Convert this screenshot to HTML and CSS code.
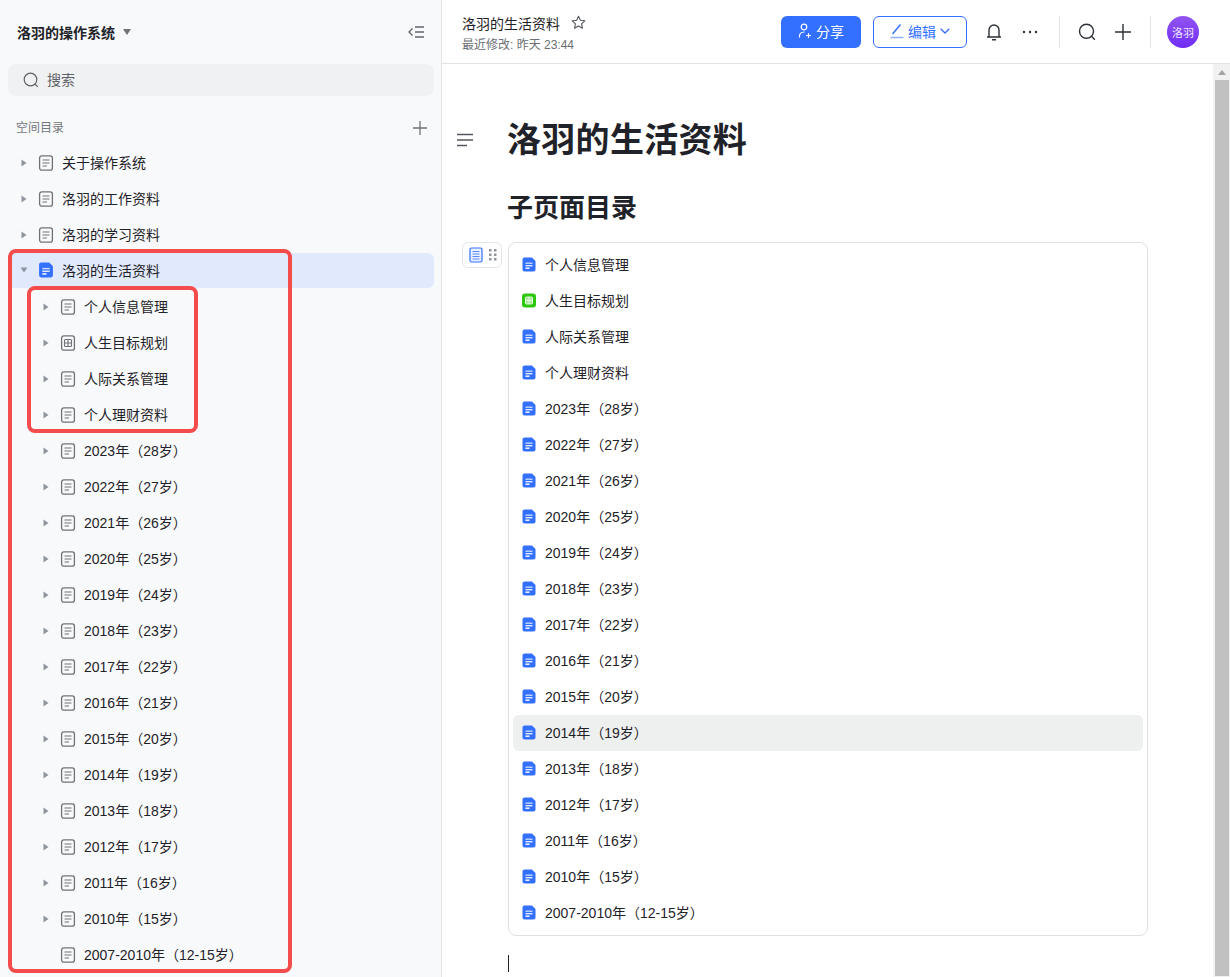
FILE: index.html
```html
<!DOCTYPE html>
<html>
  <head>
    <meta charset="utf-8">
    <title>洛羽的生活资料</title>
    <link rel="stylesheet" href="styles.css">
  </head>
  <body>
    <svg class="defs" width="0" height="0">
      <symbol id="doc" viewBox="0 0 16 16">
        <rect x="1.6" y="0.8" width="12.8" height="14.4" rx="2.2" fill="none" stroke="#6f7378" stroke-width="1.3"/>
        <path d="M4.5 5h7M4.5 8h7M4.5 11h4.5" fill="none" stroke="#6f7378" stroke-width="1.2"/>
      </symbol>
      <symbol id="sheet" viewBox="0 0 16 16">
        <rect x="1.6" y="0.8" width="12.8" height="14.4" rx="2.2" fill="none" stroke="#6f7378" stroke-width="1.3"/>
        <rect x="4.5" y="4.5" width="7" height="7" rx="1" fill="none" stroke="#6f7378" stroke-width="1.1"/>
        <path d="M8 4.5v7M4.5 8h7" stroke="#6f7378" stroke-width="1.1"/>
      </symbol>
      <symbol id="doc-blue" viewBox="0 0 14 15">
        <path d="M2.500 0.500h7.500L13.500 4v8.500a2 2 0 0 1-2 2h-9a2 2 0 0 1-2-2v-10a2 2 0 0 1 2-2z" fill="#3370ff"/>
        <path d="M3.500 5.500h7v1.400h-7z" fill="#c5d6ff"/>
        <path d="M3.500 8h7v1.400h-7z" fill="#dfe8ff"/>
        <path d="M3.500 10.500h4v1.400h-4z" fill="#fff"/>
      </symbol>
      <symbol id="sheet-green" viewBox="0 0 14 14">
        <rect width="14" height="14" rx="3" fill="#2ec80c"/>
        <rect x="3.500" y="3.500" width="7" height="7" rx="1" fill="#a5e896" stroke="#e4f8df" stroke-width="1"/>
        <path d="M7 3.500v7M3.500 7h7" stroke="#e4f8df" stroke-width="1"/>
      </symbol>
      <symbol id="arrow" viewBox="0 0 8 8">
        <path d="M1.500 0.500L6.500 4L1.500 7.500z" fill="#8f959e"/>
      </symbol>
    </svg>

    <div class="app">
      <aside class="sidebar">
        <div class="space-head">
          <span class="space-name">洛羽的操作系统</span>
          <svg class="space-caret" width="8" height="6" viewBox="0 0 8 6"><path d="M0 0h8L4 6z" fill="#6f7378"/></svg>
          <svg class="collapse" width="16" height="12" viewBox="0 0 16 12"><path d="M4.500 2.500L1 6l3.500 3.500M7 1h9M7 6h9M7 11h9" fill="none" stroke="#5f6368" stroke-width="1.300"/></svg>
        </div>
        <div class="search">
          <svg width="16" height="16" viewBox="0 0 16 16"><circle cx="7.500" cy="7.500" r="6.300" fill="none" stroke="#5f6368" stroke-width="1.200"/><path d="M12 12l2.800 2.800" stroke="#5f6368" stroke-width="1.200"/></svg>
          <span>搜索</span>
        </div>
        <div class="tree-title">
          <span>空间目录</span>
          <svg width="14" height="14" viewBox="0 0 14 14"><path d="M7 0v14M0 7h14" stroke="#6f7378" stroke-width="1.300"/></svg>
        </div>
        <ul class="tree">
          <li class="node"><svg class="arrow"><use href="#arrow"/></svg><svg class="icon"><use href="#doc"/></svg>关于操作系统</li>
          <li class="node"><svg class="arrow"><use href="#arrow"/></svg><svg class="icon"><use href="#doc"/></svg>洛羽的工作资料</li>
          <li class="node"><svg class="arrow"><use href="#arrow"/></svg><svg class="icon"><use href="#doc"/></svg>洛羽的学习资料</li>
          <li class="node active"><svg class="arrow open"><use href="#arrow"/></svg><svg class="icon"><use href="#doc-blue"/></svg>洛羽的生活资料</li>
          <li class="node sub"><svg class="arrow"><use href="#arrow"/></svg><svg class="icon"><use href="#doc"/></svg>个人信息管理</li>
          <li class="node sub"><svg class="arrow"><use href="#arrow"/></svg><svg class="icon"><use href="#sheet"/></svg>人生目标规划</li>
          <li class="node sub"><svg class="arrow"><use href="#arrow"/></svg><svg class="icon"><use href="#doc"/></svg>人际关系管理</li>
          <li class="node sub"><svg class="arrow"><use href="#arrow"/></svg><svg class="icon"><use href="#doc"/></svg>个人理财资料</li>
          <li class="node sub"><svg class="arrow"><use href="#arrow"/></svg><svg class="icon"><use href="#doc"/></svg>2023年（28岁）</li>
          <li class="node sub"><svg class="arrow"><use href="#arrow"/></svg><svg class="icon"><use href="#doc"/></svg>2022年（27岁）</li>
          <li class="node sub"><svg class="arrow"><use href="#arrow"/></svg><svg class="icon"><use href="#doc"/></svg>2021年（26岁）</li>
          <li class="node sub"><svg class="arrow"><use href="#arrow"/></svg><svg class="icon"><use href="#doc"/></svg>2020年（25岁）</li>
          <li class="node sub"><svg class="arrow"><use href="#arrow"/></svg><svg class="icon"><use href="#doc"/></svg>2019年（24岁）</li>
          <li class="node sub"><svg class="arrow"><use href="#arrow"/></svg><svg class="icon"><use href="#doc"/></svg>2018年（23岁）</li>
          <li class="node sub"><svg class="arrow"><use href="#arrow"/></svg><svg class="icon"><use href="#doc"/></svg>2017年（22岁）</li>
          <li class="node sub"><svg class="arrow"><use href="#arrow"/></svg><svg class="icon"><use href="#doc"/></svg>2016年（21岁）</li>
          <li class="node sub"><svg class="arrow"><use href="#arrow"/></svg><svg class="icon"><use href="#doc"/></svg>2015年（20岁）</li>
          <li class="node sub"><svg class="arrow"><use href="#arrow"/></svg><svg class="icon"><use href="#doc"/></svg>2014年（19岁）</li>
          <li class="node sub"><svg class="arrow"><use href="#arrow"/></svg><svg class="icon"><use href="#doc"/></svg>2013年（18岁）</li>
          <li class="node sub"><svg class="arrow"><use href="#arrow"/></svg><svg class="icon"><use href="#doc"/></svg>2012年（17岁）</li>
          <li class="node sub"><svg class="arrow"><use href="#arrow"/></svg><svg class="icon"><use href="#doc"/></svg>2011年（16岁）</li>
          <li class="node sub"><svg class="arrow"><use href="#arrow"/></svg><svg class="icon"><use href="#doc"/></svg>2010年（15岁）</li>
          <li class="node sub"><span class="arrow"></span><svg class="icon"><use href="#doc"/></svg>2007-2010年（12-15岁）</li>
        </ul>
      </aside>

      <main class="main">
        <header class="topbar">
          <div class="doc-info">
            <div class="doc-name">
              <span>洛羽的生活资料</span>
              <svg width="15" height="15" viewBox="0 0 16 16"><path d="M8 1.300l2 4.300 4.700.6-3.400 3.200.9 4.700L8 11.800l-4.200 2.300.9-4.700L1.300 6.200 6 5.600z" fill="none" stroke="#55595e" stroke-width="1.200" stroke-linejoin="round"/></svg>
            </div>
            <div class="doc-time">最近修改: 昨天 23:44</div>
          </div>
          <button class="btn share">
            <svg width="14" height="16" viewBox="0 0 14 16"><circle cx="6" cy="4" r="2.800" fill="none" stroke="#fff" stroke-width="1.200"/><path d="M1.500 14.500c-.6-3.500 1.500-5.500 5-5.500M8 12.500h5M10.500 10v5" fill="none" stroke="#fff" stroke-width="1.200"/></svg>
            分享
          </button>
          <button class="btn edit">
            <svg width="14" height="16" viewBox="0 0 14 16"><path d="M2.500 11L10.500 1.500" fill="none" stroke="#3370ff" stroke-width="1.400"/><path d="M0.500 14.500h13" stroke="#8fb0ff" stroke-width="1.500"/></svg>
            编辑
            <svg width="10" height="6" viewBox="0 0 10 6"><path d="M.7.700L5 5l4.300-4.300" fill="none" stroke="#3370ff" stroke-width="1.300"/></svg>
          </button>
          <svg class="tool bell" width="16" height="18" viewBox="0 0 16 18"><path d="M1 14h14M3 14V7a5 5 0 0 1 10 0v7M6 16.800h4" fill="none" stroke="#2b2f36" stroke-width="1.400"/></svg>
          <svg class="tool dots" width="16" height="4" viewBox="0 0 16 4"><circle cx="2" cy="2" r="1.200" fill="#2b2f36"/><circle cx="8" cy="2" r="1.200" fill="#2b2f36"/><circle cx="14" cy="2" r="1.200" fill="#2b2f36"/></svg>
          <span class="divider first"></span>
          <svg class="tool find" width="18" height="18" viewBox="0 0 18 18"><circle cx="8.500" cy="8.300" r="7" fill="none" stroke="#2b2f36" stroke-width="1.400"/><path d="M13.500 13.300l3.300 3.500" stroke="#2b2f36" stroke-width="1.400"/></svg>
          <svg class="tool add" width="16" height="16" viewBox="0 0 16 16"><path d="M8 0v16M0 8h16" stroke="#2b2f36" stroke-width="1.400"/></svg>
          <span class="divider second"></span>
          <span class="avatar">洛羽</span>
        </header>

        <div class="body">
          <div class="content">
            <svg class="outline" width="16" height="14" viewBox="0 0 16 14"><path d="M0 1.500h16M0 7h16M0 12.500h10" stroke="#55595e" stroke-width="1.400"/></svg>
            <h1>洛羽的生活资料</h1>
            <span></span>
            <h2>子页面目录</h2>
            <div class="block-tool">
              <svg width="14" height="16" viewBox="0 0 14 16"><rect x="1" y="1" width="12" height="14" rx="1.500" fill="#eaf0ff" stroke="#3370ff" stroke-width="1.200"/><path d="M3.500 4.500h7M3.500 7h7M3.500 9.500h7M3.500 12h7" stroke="#5b8cff" stroke-width="1"/></svg>
              <svg width="8" height="12" viewBox="0 0 8 12"><g fill="#8f959e"><rect x="0" y="0" width="2.500" height="2.500"/><rect x="5" y="0" width="2.500" height="2.500"/><rect x="0" y="4.500" width="2.500" height="2.500"/><rect x="5" y="4.500" width="2.500" height="2.500"/><rect x="0" y="9" width="2.500" height="2.500"/><rect x="5" y="9" width="2.500" height="2.500"/></g></svg>
            </div>
            <ul class="pages">
              <li class="page"><svg class="page-icon"><use href="#doc-blue"/></svg>个人信息管理</li>
              <li class="page"><svg class="page-icon"><use href="#sheet-green"/></svg>人生目标规划</li>
              <li class="page"><svg class="page-icon"><use href="#doc-blue"/></svg>人际关系管理</li>
              <li class="page"><svg class="page-icon"><use href="#doc-blue"/></svg>个人理财资料</li>
              <li class="page"><svg class="page-icon"><use href="#doc-blue"/></svg>2023年（28岁）</li>
              <li class="page"><svg class="page-icon"><use href="#doc-blue"/></svg>2022年（27岁）</li>
              <li class="page"><svg class="page-icon"><use href="#doc-blue"/></svg>2021年（26岁）</li>
              <li class="page"><svg class="page-icon"><use href="#doc-blue"/></svg>2020年（25岁）</li>
              <li class="page"><svg class="page-icon"><use href="#doc-blue"/></svg>2019年（24岁）</li>
              <li class="page"><svg class="page-icon"><use href="#doc-blue"/></svg>2018年（23岁）</li>
              <li class="page"><svg class="page-icon"><use href="#doc-blue"/></svg>2017年（22岁）</li>
              <li class="page"><svg class="page-icon"><use href="#doc-blue"/></svg>2016年（21岁）</li>
              <li class="page"><svg class="page-icon"><use href="#doc-blue"/></svg>2015年（20岁）</li>
              <li class="page hover"><svg class="page-icon"><use href="#doc-blue"/></svg>2014年（19岁）</li>
              <li class="page"><svg class="page-icon"><use href="#doc-blue"/></svg>2013年（18岁）</li>
              <li class="page"><svg class="page-icon"><use href="#doc-blue"/></svg>2012年（17岁）</li>
              <li class="page"><svg class="page-icon"><use href="#doc-blue"/></svg>2011年（16岁）</li>
              <li class="page"><svg class="page-icon"><use href="#doc-blue"/></svg>2010年（15岁）</li>
              <li class="page"><svg class="page-icon"><use href="#doc-blue"/></svg>2007-2010年（12-15岁）</li>
            </ul>
            <span></span>
            <div class="caret"></div>
          </div>
          <div class="scrollbar">
            <div class="scroll-up"></div>
            <div class="scroll-thumb"></div>
          </div>
        </div>
      </main>
    </div>

    <div class="mark mark-outer"></div>
    <div class="mark mark-inner"></div>
  </body>
</html>
```

FILE: styles.css
```css
*, *::before, *::after {
  padding: 0;
  margin: 0;
  border: 0;
  box-sizing: border-box;
}

html, body {height: 100%; overflow: hidden;}
body {
  font-family: "Liberation Sans", "Noto Sans CJK SC", sans-serif;
  font-size: 14px;
  color: #1f2329;
  background: #fff;
}
ul {list-style: none;}
svg {display: block; flex-shrink: 0;}
.defs {position: absolute;}

.app {display: flex; height: 100%;}

/* sidebar */
.sidebar {width: 442px; flex-shrink: 0; background: #f8f9fb; border-right: 1px solid #e4e5e7; padding: 0 7px 0 8px; overflow: hidden;}
.space-head {display: flex; align-items: center; height: 64px; padding-left: 9px;}
.space-name {font-weight: bold; font-size: 14px;}
.space-caret {margin-left: 8px;}
.collapse {margin-left: auto; margin-right: 10px;}
.search {display: flex; align-items: center; gap: 8px; height: 32px; padding-left: 15px; background: #f0f1f3; border-radius: 8px; color: #5f6368;}
.search span {margin-bottom: 2px;}
.tree-title {display: flex; align-items: center; justify-content: space-between; height: 49px; padding: 14px 7px 0 8px; font-size: 12px; color: #73777d;}
.tree-title span {margin-bottom: 2px;}
.node {display: flex; align-items: center; height: 36px; padding: 0 0 2px 12px; white-space: nowrap;}
.node.sub {padding-left: 34px;}
.node.active {height: 35px; margin-bottom: 1px; background: #e1e9fd; border-radius: 6px;}
.arrow {width: 8px; height: 8px; margin: 1px 10px 0 0;}
.arrow.open {transform: rotate(90deg);}
.icon {width: 16px; height: 16px; margin: 1px 8px 0 0;}

/* main */
.main {flex: 1; min-width: 0; display: flex; flex-direction: column;}
.topbar {display: flex; align-items: center; height: 64px; flex-shrink: 0; border-bottom: 1px solid #e2e3e5; padding-left: 20px;}
.doc-info {width: 319px; margin-top: 4px;}
.doc-name {display: flex; align-items: center; gap: 11px; line-height: 20px;}
.doc-name svg {margin-top: -2px;}
.doc-time {font-size: 12px; line-height: 18px; color: #6b6f75; margin-top: 2px;}
.btn {display: flex; align-items: center; justify-content: center; height: 32px; border-radius: 6px; font: inherit; gap: 4px; padding-bottom: 2px;}
.share {width: 80px; background: #3370ff; color: #fff;}
.edit {width: 94px; margin-left: 12px; background: #fff; border: 1px solid #3370ff; color: #3370ff;}
.bell {margin-left: 19px;}
.dots {margin-left: 20px;}
.divider {width: 1px; height: 32px; background: #e2e3e5;}
.divider.first {margin-left: 21px;}
.find {margin-left: 18px;}
.add {margin-left: 19px;}
.divider.second {margin-left: 19px;}
.avatar {display: flex; align-items: center; justify-content: center; width: 32px; height: 32px; margin-left: 16px; border-radius: 50%; background: linear-gradient(#9255f0, #6f2cf8); color: #efe6ff; font-size: 11px;}

.body {flex: 1; min-height: 0; display: flex;}
.content {flex: 1; min-width: 0; display: grid; grid-template-columns: 66px 640px; grid-auto-rows: min-content; padding-top: 54px;}
.outline {margin: 15px 0 0 15px;}
h1 {font-size: 34px; line-height: 44px; font-weight: bold; margin-left: -1px; letter-spacing: 0.3px;}
h2 {font-size: 26px; line-height: 36px; font-weight: bold; margin: 28px 0 16px -1px;}
.block-tool {display: flex; align-items: center; gap: 6px; width: 40px; height: 26px; margin-left: 20px; padding-left: 6px; background: #fff; border: 1px solid #e4e5e7; border-radius: 6px;}
.pages {height: 694px; padding: 4px; border: 1px solid #dfe0e2; border-radius: 8px;}
.page {display: flex; align-items: center; height: 36px; padding: 0 0 2px 9px; border-radius: 6px; white-space: nowrap;}
.page.hover {background: #eeefef;}
.page-icon {width: 14px; height: 15px; margin-right: 9px;}
.caret {width: 1px; height: 17px; margin-top: 19px; background: #1f2329;}

.scrollbar {width: 17px; flex-shrink: 0; background: #f1f1f1; padding: 0 1px 0 2px;}
.scroll-up {width: 0; height: 0; margin: 6px auto 5px; border: 4px solid transparent; border-top: 0; border-bottom: 5px solid #a3a3a3;}
.scroll-thumb {height: 896px; background: #c1c1c1;}

/* annotation marks drawn over the screenshot */
.mark {position: absolute; border: 4px solid #f44c4c; border-radius: 8px; pointer-events: none;}
.mark-outer {left: 8px; top: 249px; width: 284px; height: 724px;}
.mark-inner {left: 27px; top: 286px; width: 171px; height: 147px;}
```
